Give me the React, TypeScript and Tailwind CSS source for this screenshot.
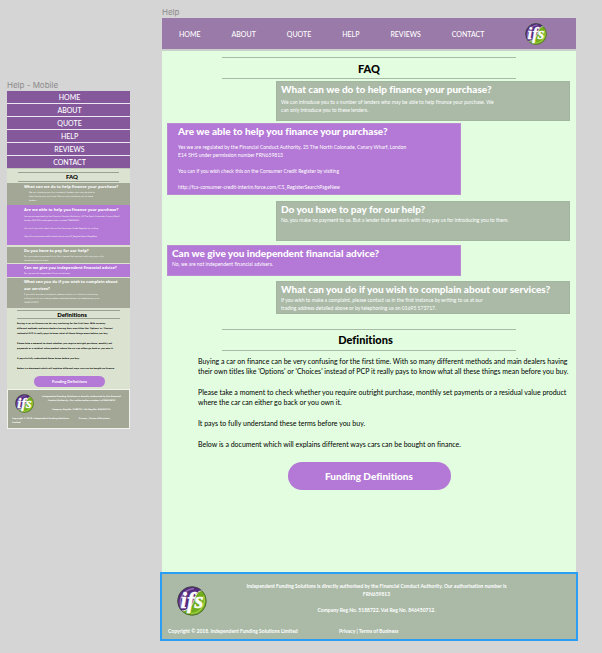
import type { ReactNode } from "react";

const navItems = ["HOME", "ABOUT", "QUOTE", "HELP", "REVIEWS", "CONTACT"];

function Logo({ className }: { className: string }) {
  return (
    <svg viewBox="0 0 60 60" className={className} role="img" aria-label="ifs">
      <circle cx="30" cy="30" r="29" fill="#72ae1c" />
      <path d="M9 50 A29 29 0 0 1 50 9 C40 10 37 20 33 31 C29 42 20 50 9 50 Z" fill="#552b80" />
      <path d="M9 50 C20 50 29 42 33 31 C37 20 40 10 50 9" fill="none" stroke="#dfe8d8" strokeWidth="2" />
      <path d="M8 42 C2 24 14 8 34 5" fill="none" stroke="#8c68ab" strokeWidth="3" />
      <path d="M53 20 C59 36 48 54 28 55" fill="none" stroke="#9ccc42" strokeWidth="3" />
      <circle cx="30" cy="30" r="28.5" fill="none" stroke="#3c4440" strokeOpacity="0.6" strokeWidth="2" />
      <text x="7" y="44" fontSize="46" fill="#ffffff" stroke="#ffffff" strokeWidth="1" fontFamily="'Liberation Serif', serif" fontStyle="italic" fontWeight="700">
        ifs
      </text>
    </svg>
  );
}

function Lines({ lines }: { lines: string[] }) {
  return (
    <p>
      {lines.map((line) => (
        <span key={line} className="block whitespace-nowrap">
          {line}
        </span>
      ))}
    </p>
  );
}

function Card({ title, className, bodyClass, children }: { title: string; className: string; bodyClass: string; children: ReactNode }) {
  return (
    <article className={`w-[294px] border pb-px text-white ${className}`}>
      <h3 className="text-[10px] leading-[14px] font-black whitespace-nowrap">{title}</h3>
      <div className={`flex flex-col gap-2 text-[5px] leading-[8px] ${bodyClass}`}>{children}</div>
    </article>
  );
}

function MobileCard({ title, className, children }: { title: string[]; className: string; children: ReactNode }) {
  return (
    <article className={`pl-[17px] text-white ${className}`}>
      <h3 className="font-['Open_Sans',sans-serif] text-[4px] leading-[7px] font-bold">
        {title.map((line) => (
          <span key={line} className="block whitespace-nowrap">
            {line}
          </span>
        ))}
      </h3>
      <div className="flex flex-col gap-1 font-['DejaVu_Sans',sans-serif] text-[2px] leading-[4px] text-white">{children}</div>
    </article>
  );
}

function MobileFrame() {
  return (
    <section className="w-[123px] shrink-0 pt-20">
      <h2 className="font-[Inter,sans-serif] text-[8px] leading-[11px] text-[#8b8b8b]">Help - Mobile</h2>
      <div className="overflow-hidden bg-[#dbe2cf]">
        <nav className="flex flex-col gap-px border-b border-[#c3cabb] bg-[#eee6f2]">
          {navItems.map((item) => (
            <a key={item} href="#" className="bg-[#84589b] pt-px pl-[2px] text-center text-[7px] leading-[11px] font-medium text-white">
              {item}
            </a>
          ))}
        </nav>
        <h2 className="mx-[11px] mt-[3px] border-y border-[#9aa092] pl-[7px] text-center text-[6px] leading-[8px] font-black text-black">FAQ</h2>
        <div className="mt-px flex flex-col">
          <MobileCard className="h-[22px] bg-[#a2a796]" title={["What can we do to help finance your purchase?"]}>
            <div className="pl-[5px]">
              <Lines lines={["We can introduce you to a number of lenders who may be able to", "help finance your purchase. We can only introduce you to these", "lenders."]} />
            </div>
          </MobileCard>
          <MobileCard className="h-10 bg-[#b478d6] pt-px" title={["Are we able to help you finance your purchase?"]}>
            <div className="mt-px flex flex-col gap-1">
              <Lines lines={["Yes we are regulated by the Financial Conduct Authority, 25 The North Colonade, Canary Wharf,", "London E14 5HS under permission number FRN659813"]} />
              <p className="whitespace-nowrap">You can if you wish check this on the Consumer Credit Register by visiting</p>
              <p className="whitespace-nowrap">http://fca-consumer-credit-interim.force.com/CS_RegisterSearchPageNew</p>
            </div>
          </MobileCard>
          <MobileCard className="mt-[2px] h-4 bg-[#a2a796]" title={["Do you have to pay for our help?"]}>
            <Lines lines={["No, you make no payment to us. But a lender that we work with may pay us for", "introducing you to them."]} />
          </MobileCard>
          <MobileCard className="mt-px h-[13px] bg-[#b478d6]" title={["Can we give you independent financial advice?"]}>
            <Lines lines={["No, we are not independent financial advisers."]} />
          </MobileCard>
          <MobileCard className="mt-px h-[30px] bg-[#a2a796]" title={["What can you do if you wish to complain about", "our services?"]}>
            <Lines lines={["If you wish to make a complaint, please contact us in the first instance by", "writing to us at our trading address detailed above or by telephoning us on", "01695 573717."]} />
          </MobileCard>
        </div>
        <h2 className="mx-[10px] mt-[2px] border-y border-[#9aa092] pl-[7px] text-center text-[6px] leading-[7px] font-black text-black">Definitions</h2>
        <div className="ml-[10px] mt-[2px] flex flex-col gap-[5px] font-['DejaVu_Sans',sans-serif] text-[2px] leading-[5px] font-bold text-black">
          <Lines lines={["Buying a car on finance can be very confusing for the first time. With so many", "different methods and main dealers having their own titles like 'Options' or 'Choices'", "instead of PCP it really pays to know what all these things mean before you buy."]} />
          <Lines lines={["Please take a moment to check whether you require outright purchase, monthly set", "payments or a residual value product where the car can either go back or you own it."]} />
          <p>It pays to fully understand these terms before you buy.</p>
          <p className="whitespace-nowrap">Below is a document which will explains different ways cars can be bought on finance.</p>
        </div>
        <button className="ml-[27px] mt-[5px] block h-[11px] w-[71px] rounded-full bg-[#b478d6] text-[4px] leading-[11px] font-bold text-white">Funding Definitions</button>
        <footer className="mt-[2px] border border-[#f0f2ec] bg-[#a2a796] font-['DejaVu_Sans',sans-serif] text-[2px] leading-[4px] font-bold text-white">
          <div className="flex h-[26px] pl-[7px] pt-[4px]">
            <Logo className="size-[19px]" />
            <div className="flex flex-1 flex-col gap-[5px] text-center">
              <Lines lines={["Independent Funding Solutions is directly authorised by the Financial", "Conduct Authority. Our authorisation number is FRN659813"]} />
              <p>Company Reg No. 5188722. Vat Reg No. 846450712.</p>
            </div>
          </div>
          <div className="flex gap-[10px] pb-1 pl-1">
            <Lines lines={["Copyright © 2018. Independent Funding Solutions", "Limited"]} />
            <p><a href="#">Privacy</a> | <a href="#">Terms of Business</a></p>
          </div>
        </footer>
      </div>
    </section>
  );
}

function DesktopFrame() {
  return (
    <section className="min-w-0 flex-1 pt-[6px]">
      <h2 className="font-[Inter,sans-serif] text-[8px] leading-[12px] text-[#8b8b8b]">Help</h2>
      <div className="bg-[#e2fddf]">
        <header className="flex h-[33px] items-center border-b-2 border-[#c9cfc9] bg-[#9a7aa8] pl-[17px] pr-[29px]">
          <nav className="flex flex-1 gap-[31px] text-[7px] leading-[10px] font-medium text-white">
            {navItems.map((item) => (
              <a key={item} href="#">
                {item}
              </a>
            ))}
          </nav>
          <Logo className="size-[22px]" />
        </header>
        <h1 className="mx-[60px] mt-[6px] border-y border-[#a9baa7] pt-px text-center text-[11px] leading-[19px] font-black text-black">FAQ</h1>
        <div className="mt-[2px] flex flex-col pl-[5px] pr-[6px]">
          <Card title="What can we do to help finance your purchase?" className="h-10 self-end border-[#a3b49f] bg-[#aabaa7] pl-1" bodyClass="pt-[2px]">
            <Lines lines={["We can introduce you to a number of lenders who may be able to help finance your purchase. We", "can only introduce you to these lenders."]} />
          </Card>
          <Card title="Are we able to help you finance your purchase?" className="mt-[2px] h-[72px] border-[#ba8bd0] bg-[#b478d6] pl-[10px]" bodyClass="pt-[5px]">
            <Lines lines={["Yes we are regulated by the Financial Conduct Authority, 25 The North Colonade, Canary Wharf, London", "E14 5HS under permission number FRN659813"]} />
            <p>You can if you wish check this on the Consumer Credit Register by visiting</p>
            <p>http://fca-consumer-credit-interim.force.com/CS_RegisterSearchPageNew</p>
          </Card>
          <Card title="Do you have to pay for our help?" className="mt-[6px] h-10 self-end border-[#a3b49f] bg-[#aabaa7] pl-1" bodyClass="">
            <p>No, you make no payment to us. But a lender that we work with may pay us for introducing you to them.</p>
          </Card>
          <Card title="Can we give you independent financial advice?" className="mt-1 h-[31px] border-[#ba8bd0] bg-[#b478d6] pl-1" bodyClass="">
            <p>No, we are not independent financial advisers.</p>
          </Card>
          <Card title="What can you do if you wish to complain about our services?" className="mt-[5px] h-[33px] self-end border-[#a3b49f] bg-[#aabaa7] pl-1" bodyClass="">
            <Lines lines={["If you wish to make a complaint, please contact us in the first instance by writing to us at our", "trading address detailed above or by telephoning us on 01695 573717."]} />
          </Card>
        </div>
        <h2 className="mx-[60px] mt-[15px] border-y border-[#a9baa7] pr-[7px] text-center text-[11px] leading-[20px] font-black text-black">Definitions</h2>
        <div className="ml-9 mt-[5px] flex flex-col gap-[11px] text-[7px] leading-[10px] font-normal text-black">
          <Lines lines={["Buying a car on finance can be very confusing for the first time. With so many different methods and main dealers having", "their own titles like 'Options' or 'Choices' instead of PCP it really pays to know what all these things mean before you buy."]} />
          <Lines lines={["Please take a moment to check whether you require outright purchase, monthly set payments or a residual value product", "where the car can either go back or you own it."]} />
          <p>It pays to fully understand these terms before you buy.</p>
          <p>Below is a document which will explains different ways cars can be bought on finance.</p>
        </div>
        <button className="mx-auto mt-[13px] block h-7 w-[163px] rounded-full bg-[#b478d6] text-[10px] font-black text-white">Funding Definitions</button>
        <footer className="mt-[84px] bg-[#aabaa7] pb-1 text-[5px] leading-[8px] font-bold text-white outline-2 outline-[#2a9df4]">
          <div className="flex h-[53px] pl-[15px] pt-2">
            <Logo className="mt-1 size-[30px]" />
            <div className="flex flex-1 flex-col gap-2 pr-[30px] text-center">
              <Lines lines={["Independent Funding Solutions is directly authorised by the Financial Conduct Authority. Our authorisation number is", "FRN659813"]} />
              <p>Company Reg No. 5188722. Vat Reg No. 846450712.</p>
            </div>
          </div>
          <div className="flex pl-[6px]">
            <p className="w-[171px]">Copyright © 2018. Independent Funding Solutions Limited</p>
            <p><a href="#">Privacy</a> | <a href="#">Terms of Business</a></p>
          </div>
        </footer>
      </div>
    </section>
  );
}

export default function App() {
  return (
    <main className="flex min-h-screen items-start gap-8 bg-[#d5d5d5] pb-3 pl-[7px] pr-[26px] font-[Lato,sans-serif] [font-variant-ligatures:none]">
      <MobileFrame />
      <DesktopFrame />
    </main>
  );
}
